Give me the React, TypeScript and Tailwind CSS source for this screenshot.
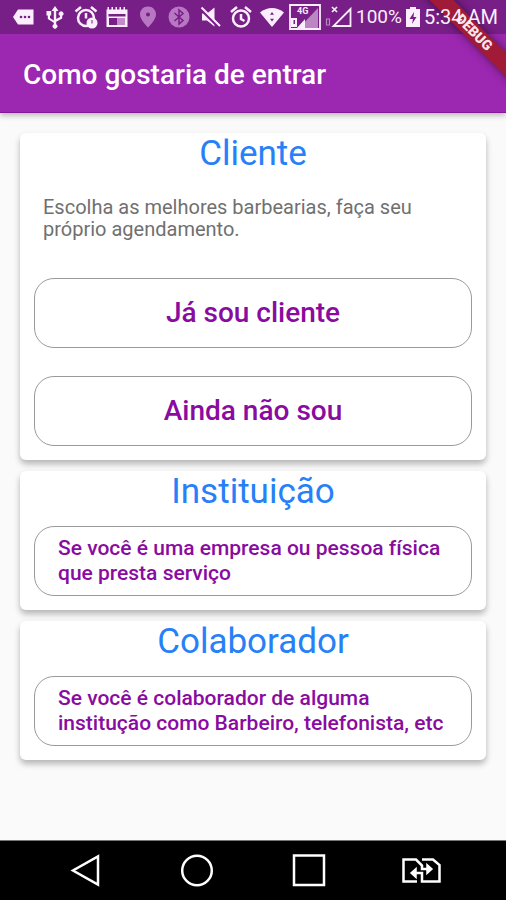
import React from 'react';

const StatusIcon = ({ children, className = '' }: { children: React.ReactNode; className?: string }) => (
  <svg viewBox="0 0 24 24" className={`h-6 w-6 shrink-0 ${className}`} fill="currentColor" aria-hidden="true">
    {children}
  </svg>
);

const StatusBar = () => (
  <div className="relative z-20 flex h-[34px] items-center justify-between pr-2 pl-3 text-[#fbeffd]">
    <div className="flex items-center gap-[7px]">
      <StatusIcon>
        <path d="M1 12 6 4.5h15.5v15H6z" />
        <g fill="#781e87">
          <circle cx="9" cy="12" r="1.3" />
          <circle cx="13" cy="12" r="1.3" />
          <circle cx="17" cy="12" r="1.3" />
        </g>
      </StatusIcon>
      <StatusIcon>
        <path d="M12 1 8.500 6h2.300v9.500L7 13v-2.500h1.200v-4.500H3.500v4.500h1.300V14l6 3.700v1.500a2.400 2.400 0 1 0 2.400 0v-2.500l6-3.200v-2.700a2.300 2.300 0 1 0-2.200 0V12l-3.800 2V6h2.300z" />
      </StatusIcon>
      <StatusIcon>
        <g fill="none" stroke="currentColor" strokeWidth="2.500">
          <circle cx="12" cy="13" r="8" />
          <path d="M1.500 6.500 7 2M22.500 6.500 17 2M12 8v5.500" />
        </g>
        <circle cx="18" cy="18" r="5.500" />
        <path d="M18 15v3.500" stroke="#a45caf" strokeWidth="1.500" />
      </StatusIcon>
      <StatusIcon>
        <path fillRule="evenodd" d="M1.500 4.500h21V22h-21zM3.500 9v2.500h17V9zM4 13v7h8v-7z" />
        <path d="M12 13h8v7h-8z" fill="#c48acc" />
        <path d="M2.500 2h1.500v3H2.500zM6.500 2H8v3H6.500zM10.500 2H12v3h-1.500zM14.500 2H16v3h-1.500zM18.500 2H20v3h-1.500z" />
      </StatusIcon>
      <StatusIcon className="text-[#b877c2]">
        <path
          fillRule="evenodd"
          d="M12 1.500c-4.600 0-8 3.500-8 8 0 5.500 8 13 8 13s8-7.500 8-13c0-4.500-3.400-8-8-8zm0 6a2 2 0 1 1 0 4 2 2 0 0 1 0-4z"
        />
      </StatusIcon>
      <StatusIcon className="text-[#b877c2]">
        <circle cx="12" cy="12" r="10.500" />
        <path d="M7.500 8 16 15.500 12 19V5l4 3.500L7.500 16" fill="none" stroke="#781e87" strokeWidth="1.500" />
      </StatusIcon>
      <StatusIcon>
        <path d="M4 8.500v7h5l7.500 6v-19L9 8.500z" />
        <path d="M3 4.500 20.500 22" stroke="#781e87" strokeWidth="2.500" />
        <path d="M3.500 2.500 22 21" stroke="currentColor" strokeWidth="2" />
      </StatusIcon>
      <StatusIcon>
        <g fill="none" stroke="currentColor" strokeWidth="2.500">
          <circle cx="12" cy="13.500" r="8" />
          <path d="M2 7 8 2M22 7l-6-5M12 9v5l3.500 2" />
        </g>
      </StatusIcon>
      <StatusIcon>
        <path d="M0 7.500C7 1.500 17 1.500 24 7.500L12 22z" />
        <path d="m12 7 2 2.800h-4zM12 16.500l-2-2.800h4z" fill="#781e87" />
      </StatusIcon>
    </div>

    <div className="flex items-center gap-1">
      <svg viewBox="0 0 32 26" className="h-[26px] w-8 shrink-0" aria-hidden="true">
        <path d="M1 1h30v24H1z" fill="none" stroke="currentColor" strokeWidth="1.800" />
        <path d="M29 4v20H10z" fill="currentColor" opacity=".5" />
        <path d="M16 15v9H8z" fill="currentColor" />
        <path fillRule="evenodd" d="M2 14h6v9H2zM4.500 16v4H6v-4z" fill="currentColor" />
        <text x="8" y="10" fontSize="9" fontWeight="700" fontFamily="Roboto" fill="currentColor">4G</text>
      </svg>
      <svg viewBox="0 0 27 24" className="h-6 w-[27px] shrink-0" fill="none" stroke="currentColor" aria-hidden="true">
        <path d="M25.500 4v17H8.500z" strokeWidth="1.800" />
        <path d="m7 2 5 5M12 2 7 7" strokeWidth="1.700" />
        <path d="M1.500 14h3v6h-3z" strokeWidth="1.200" opacity=".5" />
      </svg>
      <span className="text-[19px] leading-6">100%</span>
      <svg viewBox="0 0 14 22" className="h-[22px] w-3.5 shrink-0" fill="currentColor" aria-hidden="true">
        <path d="M4 1h6v2h4v18H0V3h4z" />
        <path d="M8 6 3.500 13H7l-1 5 4.500-7H7.500z" fill="#781e87" />
      </svg>
      <span className="text-[20px] leading-6">5:34 AM</span>
    </div>
  </div>
);

const DebugBanner = () => (
  <div className="pointer-events-none absolute top-0 right-0 z-10 h-28 w-28 overflow-hidden">
    <div className="absolute top-6 -right-10 h-[17px] w-36 rotate-45 bg-[#a11b38] text-center text-[14px] leading-[17px] font-black text-[#f6e6ea] shadow-[0_0_8px_rgba(0,0,0,0.5)]">
      DEBUG
    </div>
  </div>
);

const Card = ({ title, children }: { title: string; children: React.ReactNode }) => (
  <section className="rounded-md bg-white pb-3.5 shadow-[0_4px_6px_rgba(0,0,0,0.28)]">
    <h2 className="text-center text-[35px] leading-[41px] text-[#2680f7]">{title}</h2>
    {children}
  </section>
);

const OptionButton = ({ text }: { text: string }) => (
  <button className="h-[70px] rounded-[20px] border border-[#9a9a9a] text-[28px] font-medium text-[#890ba0]">
    {text}
  </button>
);

const DescriptionButton = ({ text }: { text: string }) => (
  <div className="mt-3.5 px-3.5">
    <button className="h-[70px] w-full rounded-[20px] border border-[#9a9a9a] pr-4 pl-[23px] text-left text-[21px] leading-[25px] font-medium text-[#890ba0]">
      {text}
    </button>
  </div>
);

const NavButton = ({ label, children }: { label: string; children: React.ReactNode }) => (
  <button aria-label={label} className="flex w-28 items-center justify-center">
    <svg viewBox="0 0 40 36" className="h-9 w-10" fill="none" stroke="currentColor" strokeWidth="2.500">
      {children}
    </svg>
  </button>
);

const NavigationBar = () => (
  <nav className="flex h-[60px] items-center justify-center border-t border-[#777] bg-black text-white">
    <NavButton label="Voltar">
      <path d="M33 3.500v28L8 17.500z" />
    </NavButton>
    <NavButton label="Início">
      <circle cx="20" cy="17.500" r="14.800" />
    </NavButton>
    <NavButton label="Recentes">
      <path d="M5 2.500h30v29.500H5z" />
    </NavButton>
    <NavButton label="Trocar chip">
      <path d="M16 28.500H2.500v-22H15l6 6v3.500h6M21 6.500h11l6.500 5.500v16.500H21V20h-7" />
      <path d="m26 11.500 5 4.500-5 4.500zM15 15.500 10 20l5 4.500z" fill="currentColor" strokeWidth="1.500" />
    </NavButton>
  </nav>
);

const App = () => {
  return (
    <div className="relative flex min-h-screen flex-col bg-[#fafafa] font-[Roboto,sans-serif]">
      <DebugBanner />
      <header className="bg-[#9c27b0] shadow-[0_2px_6px_rgba(0,0,0,0.3)]">
        <div className="bg-[#781e87]">
          <StatusBar />
        </div>
        <h1 className="flex h-[79px] items-center border-b border-[#84179a] px-[23px] pt-1 text-[28px] font-medium text-white">
          Como gostaria de entrar
        </h1>
      </header>

      <main className="flex flex-1 flex-col gap-[11px] px-5 pt-5 pb-10">
        <Card title="Cliente">
          <p className="mt-[22px] px-[23px] text-[20px] leading-[22px] text-[#707070]">
            Escolha as melhores barbearias, faça seu próprio agendamento.
          </p>
          <div className="mt-[38px] flex flex-col gap-7 px-3.5">
            <OptionButton text="Já sou cliente" />
            <OptionButton text="Ainda não sou" />
          </div>
        </Card>
        <Card title="Instituição">
          <DescriptionButton text="Se você é uma empresa ou pessoa física que presta serviço" />
        </Card>
        <Card title="Colaborador">
          <DescriptionButton text="Se você é colaborador de alguma institução como Barbeiro, telefonista, etc" />
        </Card>
      </main>

      <NavigationBar />
    </div>
  );
};

export default App;
